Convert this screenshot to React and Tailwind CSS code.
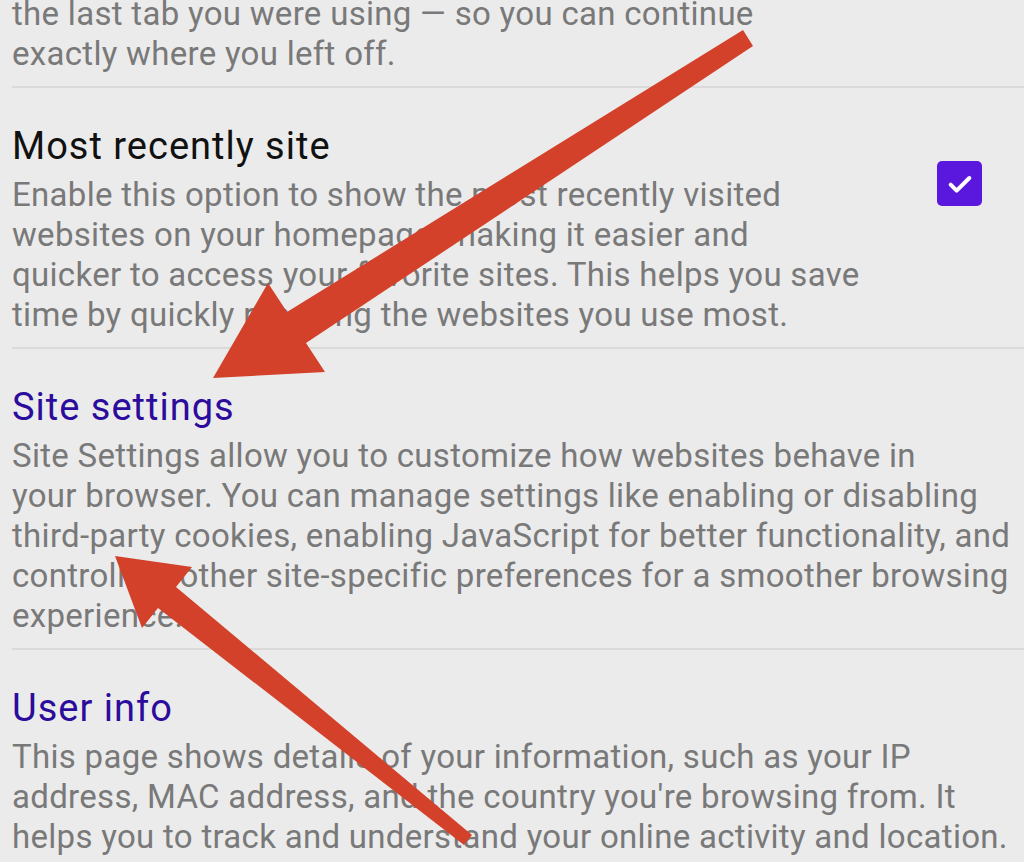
import React from "react";

const Section = ({ title, titleClass, lines, right }) => (
  <div className="flex items-start border-b-2 border-[#dadada] pt-[29px] pb-[12px]">
    <div className="flex-1">
      <div className={`text-[38px] leading-[58px] tracking-[1px] whitespace-nowrap ${titleClass}`}>{title}</div>
      <div className="text-[33px] leading-[40px] tracking-[0.3px] text-[#797979]">
        {lines.map((l, i) => (
          <div key={i} className="whitespace-nowrap">
            {l}
          </div>
        ))}
      </div>
    </div>
    {right}
  </div>
);

const Checkbox = () => (
  <div className="mt-[44px] mr-[42px] w-[45px] h-[45px] shrink-0 rounded-[5px] bg-[#5a17dd] flex items-center justify-center">
    <svg viewBox="0 0 24 24" className="w-[32px] h-[32px]" fill="none" stroke="white" strokeWidth="3" strokeLinecap="round" strokeLinejoin="round">
      <path d="M5 12.5l4.5 4.5L19 7.5" />
    </svg>
  </div>
);

const Arrows = () => (
  <svg className="absolute inset-0 pointer-events-none" width="1024" height="862" viewBox="0 0 1024 862">
    <polygon
      fill="#d3412a"
      points="743,30 287,312 268,283 213,378 325,372 306,343 753,46"
    />
    <polygon
      fill="#d3412a"
      points="115,556 192,567 176,587 472,835 464,845 158,608 142,628"
    />
  </svg>
);

export default function App() {
  return (
    <div
      className="relative w-[1024px] h-[862px] overflow-hidden bg-[#ebebeb] pl-[12px]"
      style={{ fontFamily: "Roboto, 'Noto Sans', sans-serif" }}
    >
      <div className="-mt-[6px] border-b-2 border-[#dadada] pb-[12px] text-[33px] leading-[40px] tracking-[0.3px] text-[#797979]">
        <div className="whitespace-nowrap">the last tab you were using — so you can continue</div>
        <div className="whitespace-nowrap">exactly where you left off.</div>
      </div>

      <Section
        title="Most recently site"
        titleClass="text-[#111111]"
        lines={[
          "Enable this option to show the most recently visited",
          "websites on your homepage, making it easier and",
          "quicker to access your favorite sites. This helps you save",
          "time by quickly reaching the websites you use most.",
        ]}
        right={<Checkbox />}
      />

      <Section
        title="Site settings"
        titleClass="text-[#2c0c9c]"
        lines={[
          "Site Settings allow you to customize how websites behave in",
          "your browser. You can manage settings like enabling or disabling",
          "third-party cookies, enabling JavaScript for better functionality, and",
          "controlling other site-specific preferences for a smoother browsing",
          "experience.",
        ]}
      />

      <Section
        title="User info"
        titleClass="text-[#2c0c9c]"
        lines={[
          "This page shows details of your information, such as your IP",
          "address, MAC address, and the country you're browsing from. It",
          "helps you to track and understand your online activity and location.",
        ]}
      />

      <Arrows />
    </div>
  );
}
